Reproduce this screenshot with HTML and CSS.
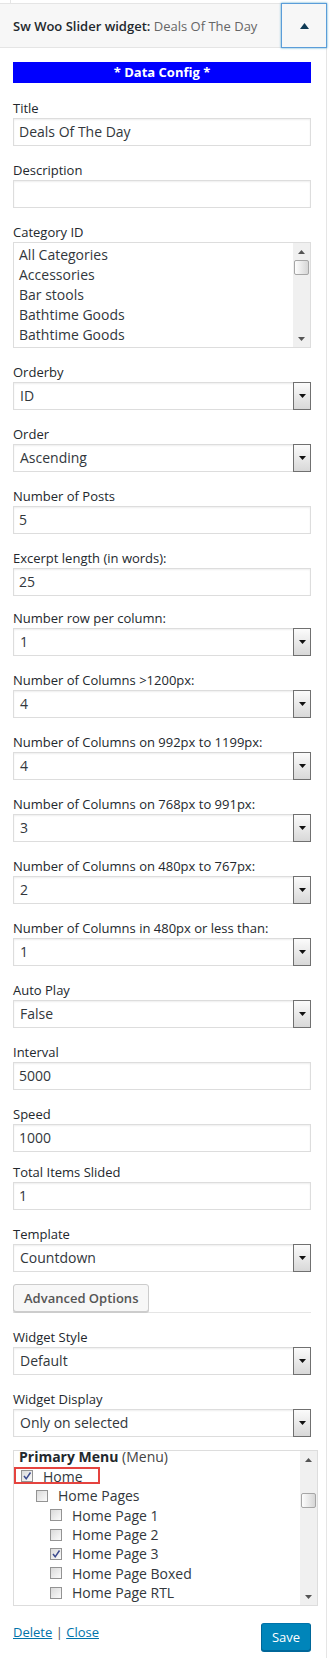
FILE: index.html
```html
<!DOCTYPE html>
<html lang="en">
<head>
<meta charset="utf-8">
<title>Sw Woo Slider widget</title>
<link rel="stylesheet" href="styles.css">
</head>
<body>
<div class="topstub"></div>
<div class="widget">
  <div class="widget-top">
    <div class="widget-title"><h3>Sw Woo Slider widget: <span class="in-title">Deals Of The Day</span></h3></div>
    <div class="toggle"><svg width="9" height="6" viewBox="0 0 9 6"><path d="M0 6 L4.5 0 L9 6Z" fill="#0f3a55"/></svg></div>
  </div>
  <div class="widget-inside">
    <div class="data-config">* Data Config *</div>

    <div class="field"><label>Title</label><div class="input">Deals Of The Day</div></div>
    <div class="field"><label>Description</label><div class="input"></div></div>
    <div class="field"><label>Category ID</label>
      <div class="listbox">
        <div class="items">
          <div>All Categories</div>
          <div>Accessories</div>
          <div>Bar stools</div>
          <div>Bathtime Goods</div>
          <div>Bathtime Goods</div>
        </div>
        <div class="sb">
          <div class="arr"><svg width="7" height="4" viewBox="0 0 7 4"><path d="M0 4 L3.5 0 L7 4Z" fill="#555"/></svg></div>
          <div class="thumb"></div>
          <div class="space"></div>
          <div class="arr"><svg width="7" height="4" viewBox="0 0 7 4"><path d="M0 0 L3.5 4 L7 0Z" fill="#555"/></svg></div>
        </div>
      </div>
    </div>
    <div class="field"><label>Orderby</label><div class="sel"><span class="val">ID</span><span class="btn"><svg width="7" height="4" viewBox="0 0 7 4"><path d="M0 0 L3.5 4 L7 0Z" fill="#111"/></svg></span></div></div>
    <div class="field"><label>Order</label><div class="sel"><span class="val">Ascending</span><span class="btn"><svg width="7" height="4" viewBox="0 0 7 4"><path d="M0 0 L3.5 4 L7 0Z" fill="#111"/></svg></span></div></div>
    <div class="field"><label>Number of Posts</label><div class="input">5</div></div>
    <div class="field tight1"><label>Excerpt length (in words):</label><div class="input">25</div></div>
    <div class="field"><label>Number row per column:</label><div class="sel"><span class="val">1</span><span class="btn"><svg width="7" height="4" viewBox="0 0 7 4"><path d="M0 0 L3.5 4 L7 0Z" fill="#111"/></svg></span></div></div>
    <div class="field"><label>Number of Columns &gt;1200px:</label><div class="sel"><span class="val">4</span><span class="btn"><svg width="7" height="4" viewBox="0 0 7 4"><path d="M0 0 L3.5 4 L7 0Z" fill="#111"/></svg></span></div></div>
    <div class="field"><label>Number of Columns on 992px to 1199px:</label><div class="sel"><span class="val">4</span><span class="btn"><svg width="7" height="4" viewBox="0 0 7 4"><path d="M0 0 L3.5 4 L7 0Z" fill="#111"/></svg></span></div></div>
    <div class="field"><label>Number of Columns on 768px to 991px:</label><div class="sel"><span class="val">3</span><span class="btn"><svg width="7" height="4" viewBox="0 0 7 4"><path d="M0 0 L3.5 4 L7 0Z" fill="#111"/></svg></span></div></div>
    <div class="field"><label>Number of Columns on 480px to 767px:</label><div class="sel"><span class="val">2</span><span class="btn"><svg width="7" height="4" viewBox="0 0 7 4"><path d="M0 0 L3.5 4 L7 0Z" fill="#111"/></svg></span></div></div>
    <div class="field"><label>Number of Columns in 480px or less than:</label><div class="sel"><span class="val">1</span><span class="btn"><svg width="7" height="4" viewBox="0 0 7 4"><path d="M0 0 L3.5 4 L7 0Z" fill="#111"/></svg></span></div></div>
    <div class="field"><label>Auto Play</label><div class="sel"><span class="val">False</span><span class="btn"><svg width="7" height="4" viewBox="0 0 7 4"><path d="M0 0 L3.5 4 L7 0Z" fill="#111"/></svg></span></div></div>
    <div class="field"><label>Interval</label><div class="input">5000</div></div>
    <div class="field tight2"><label>Speed</label><div class="input">1000</div></div>
    <div class="field"><label>Total Items Slided</label><div class="input">1</div></div>
    <div class="field tight3"><label>Template</label><div class="sel"><span class="val">Countdown</span><span class="btn"><svg width="7" height="4" viewBox="0 0 7 4"><path d="M0 0 L3.5 4 L7 0Z" fill="#111"/></svg></span></div></div>

    <div class="adv-row"><button class="btn-adv" type="button">Advanced Options</button></div>

    <div class="field"><label>Widget Style</label><div class="sel"><span class="val">Default</span><span class="btn"><svg width="7" height="4" viewBox="0 0 7 4"><path d="M0 0 L3.5 4 L7 0Z" fill="#111"/></svg></span></div></div>
    <div class="field tight4"><label>Widget Display</label><div class="sel"><span class="val">Only on selected</span><span class="btn"><svg width="7" height="4" viewBox="0 0 7 4"><path d="M0 0 L3.5 4 L7 0Z" fill="#111"/></svg></span></div></div>

    <div class="menubox">
      <div class="menu-list">
        <div class="menu-inner">
          <div class="mrow head"><b>Primary Menu</b>&nbsp;(Menu)</div>
          <div class="mrow l0 home"><span class="cb"><svg width="10" height="10" viewBox="0 0 10 10"><path d="M2 5 L4.2 7.8 L8.5 1.5" fill="none" stroke="#3b4a8e" stroke-width="1.5"/></svg></span>Home<span class="redbox"></span></div>
          <div class="mrow l1"><span class="cb"></span>Home Pages</div>
          <div class="mrow l2"><span class="cb"></span>Home Page 1</div>
          <div class="mrow l2"><span class="cb"></span>Home Page 2</div>
          <div class="mrow l2"><span class="cb"><svg width="10" height="10" viewBox="0 0 10 10"><path d="M2 5 L4.2 7.8 L8.5 1.5" fill="none" stroke="#3b4a8e" stroke-width="1.5"/></svg></span>Home Page 3</div>
          <div class="mrow l2"><span class="cb"></span>Home Page Boxed</div>
          <div class="mrow l2"><span class="cb"></span>Home Page RTL</div>
        </div>
      </div>
      <div class="sb">
        <div class="arr"><svg width="7" height="4" viewBox="0 0 7 4"><path d="M0 4 L3.5 0 L7 4Z" fill="#555"/></svg></div>
        <div class="thumb thumb-low"></div>
        <div class="space"></div>
        <div class="arr"><svg width="7" height="4" viewBox="0 0 7 4"><path d="M0 0 L3.5 4 L7 0Z" fill="#555"/></svg></div>
      </div>
    </div>

    <div class="footer">
      <div class="links"><a href="#">Delete</a> <span class="sep">|</span> <a href="#">Close</a></div>
      <button class="save" type="button">Save</button>
    </div>
  </div>
</div>
</body>
</html>
```

FILE: styles.css
```css
body {
  margin: 0;
  background: #fff;
  font-family: "Open Sans", "DejaVu Sans", sans-serif;
  font-size: 13px;
  color: #23282d;
}

.topstub {
  height: 3px;
  margin-left: 10px;
  border-left: 1px solid #e5e5e5;
}

.widget {
  width: 327px;
  box-sizing: border-box;
  border-right: 1px solid #e5e5e5;
}

.widget-top {
  display: flex;
  height: 45px;
  box-sizing: border-box;
  border-top: 1px solid #e5e5e5;
  border-bottom: 1px solid #e5e5e5;
  background: #f7f7f7;
  margin-right: -1px;
}

.widget-title {
  flex: 1;
  display: flex;
  align-items: center;
  padding-left: 13px;
}

.widget-title h3 {
  margin: 0;
  font-size: 13px;
  font-weight: 600;
  color: #23282d;
}

.in-title {
  font-weight: 400;
  color: #666;
}

.toggle {
  width: 46px;
  margin: -1px 0;
  box-sizing: border-box;
  border: 1px solid #5b9dd9;
  box-shadow: 0 0 2px rgba(30, 140, 190, 0.8);
  background: #f7f7f7;
  display: flex;
  align-items: center;
  justify-content: center;
}

.widget-inside {
  padding: 14px 15px 0 13px;
}

.data-config {
  height: 21px;
  line-height: 21px;
  background: #0000ff;
  color: #fff;
  font-weight: 700;
  text-align: center;
  margin-bottom: 15px;
}

.field {
  margin-bottom: 14px;
}

.field.tight1 { margin-bottom: 11.5px; }
.field.tight2 { margin-bottom: 10.5px; }
.field.tight3 { margin-bottom: 12px; }
.field.tight4 { margin-bottom: 13px; }

.field label {
  display: block;
  height: 20px;
  line-height: 20px;
  color: #23282d;
}

.input {
  height: 28px;
  box-sizing: border-box;
  border: 1px solid #ddd;
  box-shadow: inset 0 1px 2px rgba(0, 0, 0, 0.07);
  background: #fff;
  font-size: 14px;
  line-height: 26px;
  color: #32373c;
  padding-left: 5px;
}

.sel {
  display: flex;
  height: 28px;
  box-sizing: border-box;
  border: 1px solid #ddd;
  box-shadow: inset 0 1px 2px rgba(0, 0, 0, 0.07);
  background: #fff;
  font-size: 14px;
  line-height: 26px;
  color: #32373c;
}

.sel .val {
  flex: 1;
  padding-left: 6px;
}

.sel .btn {
  width: 18px;
  box-sizing: border-box;
  margin: -1px -1px -1px 0;
  border: 1px solid #707070;
  background: linear-gradient(#fbfbfb, #d8d8d8);
  display: flex;
  align-items: center;
  justify-content: center;
}

.listbox {
  display: flex;
  height: 106px;
  box-sizing: border-box;
  border: 1px solid #ddd;
  background: #fff;
  font-size: 14px;
  color: #32373c;
}

.listbox .items {
  flex: 1;
  padding: 2px 0 0 5px;
  line-height: 20px;
}

.sb {
  width: 17px;
  background: #f0f0f0;
  display: flex;
  flex-direction: column;
  align-items: center;
}

.sb .arr {
  height: 17px;
  width: 17px;
  display: flex;
  align-items: center;
  justify-content: center;
}

.sb .thumb {
  width: 15px;
  height: 15px;
  box-sizing: border-box;
  border: 1px solid #a6a6a6;
  border-radius: 2px;
  background: linear-gradient(to right, #fdfdfd, #d6d6d6);
}

.sb .thumb-low {
  margin-top: 25px;
}

.sb .space {
  flex: 1;
}

.adv-row {
  border-bottom: 1px solid #e5e5e5;
  margin-bottom: 14px;
  height: 28px;
}

.btn-adv {
  height: 28px;
  padding: 0 10px;
  border: 1px solid #ccc;
  border-radius: 3px;
  background: #f7f7f7;
  box-shadow: 0 1px 0 #ccc;
  font-family: "Open Sans", "DejaVu Sans", sans-serif;
  font-size: 13px;
  font-weight: 600;
  color: #555;
  cursor: pointer;
}

.menubox {
  display: flex;
  height: 156px;
  box-sizing: border-box;
  margin-right: -7px;
  border: 1px solid #ddd;
  background: #fff;
}

.menu-list {
  flex: 1;
  font-size: 14px;
  color: #32373c;
}

.menu-inner {
  margin-top: -3.6px;
}

.mrow {
  position: relative;
  display: flex;
  align-items: center;
  height: 19.4px;
  line-height: 19.4px;
  white-space: nowrap;
}

.mrow.head {
  padding-left: 5px;
  color: #444;
}

.mrow.head b {
  color: #23282d;
  font-weight: 700;
}

.mrow.l0 { padding-left: 7px; }
.mrow.l1 { padding-left: 22px; }
.mrow.l2 { padding-left: 36px; }

.cb {
  width: 12px;
  height: 12px;
  box-sizing: border-box;
  border: 1px solid #939393;
  background: linear-gradient(135deg, #dadada, #fbfbfb);
  margin-right: 10px;
  display: flex;
  align-items: center;
  justify-content: center;
  flex: none;
}

.redbox {
  position: absolute;
  left: 0;
  top: 0;
  width: 86px;
  height: 17px;
  box-sizing: border-box;
  border: 2px solid #e5433f;
}

.footer {
  display: flex;
  justify-content: space-between;
  align-items: flex-start;
  padding-top: 17px;
  padding-bottom: 7px;
}

.links {
  line-height: 18px;
  color: #555;
}

.links a {
  color: #0073aa;
  text-decoration: underline;
}

.save {
  width: 50px;
  height: 28px;
  padding: 0;
  border: 1px solid #0073aa;
  border-color: #0073aa #006799 #006799;
  border-radius: 3px;
  background: #0085ba;
  box-shadow: 0 1px 0 #006799;
  color: #fff;
  font-family: "Open Sans", "DejaVu Sans", sans-serif;
  font-size: 13px;
  cursor: pointer;
}
```
